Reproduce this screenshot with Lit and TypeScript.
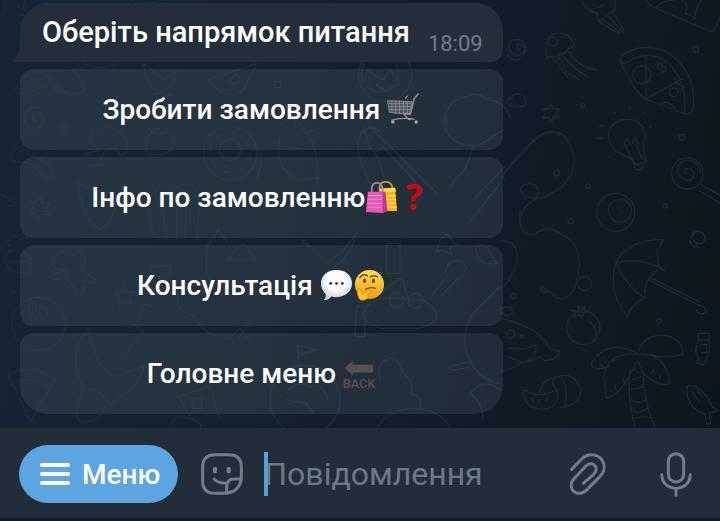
import { LitElement, html, css, svg } from "lit";
import { customElement, property } from "lit/decorators.js";

const cart = svg`
  <g fill="none" stroke="#8d8f98" stroke-linecap="round" stroke-linejoin="round">
    <path d="M1 8 L26 9 L23 22 L3 20 Z" fill="#4b535e" stroke-width="1"/>
    <path d="M1 11H25 M2 14H25 M2 17H24 M5 8V20 M9 8V21 M13 8V21 M17 8.500V21.500 M21 9V22" stroke-width=".8"/>
    <path d="M32 1 L28 6 L24 22 Q19 20 18 22 Q20 26 23 27" stroke-width="1.600"/>
    <path d="M5 28 Q14 25 28 27" stroke-width="1.400"/>
    <path d="M19 6 L21 3" stroke-width="1"/>
  </g>
  <g fill="#a9a4a5"><circle cx="6" cy="30" r="1.800"/><circle cx="30" cy="30" r="1.800"/><circle cx="23" cy="27" r="1.200"/></g>`;

const bags = svg`
  <path d="M15 11V6Q16 1 21 1Q27 1 28 6V11" fill="none" stroke="#c99a32" stroke-width="1.800"/>
  <path d="M15 8L31 7L33 31L18 31Z" fill="#f2b71f"/>
  <path d="M15 8L31 7L32 11L17 12Z" fill="#ffd94a"/>
  <path d="M22 15H32M22 19H32M22 23H32M22 27H33" stroke="#ffda5a" stroke-width="1.200"/>
  <path d="M7 12V7Q8 2 12 2Q17 2 18 7V12" fill="none" stroke="#a8879c" stroke-width="1.800"/>
  <path d="M3 11L20 11L23 31L18 33L1 32Z" fill="#e358b9"/>
  <path d="M18 11L21 11L23 31L18 33Z" fill="#b93b93"/>
  <path d="M3 15H18M3 19H18M2 23H18M2 27H18" stroke="#f27dce" stroke-width="1.200"/>`;

const question = svg`<text x="16.500" y="30" text-anchor="middle" class="mark">?</text>`;

const speech = svg`
  <defs><radialGradient id="s" cx=".5" cy=".35" r=".65">
    <stop offset=".5" stop-color="#fbfbfc"/><stop offset="1" stop-color="#c9ccd0"/></radialGradient></defs>
  <path d="M17 1C27 1 33 7 33 15C33 23 26 29 17 29C15 29 13 29 12 28C10 31 7 32 4 32C6 30 6 28 6 26C3 23 1 20 1 15C1 7 7 1 17 1Z" fill="url(#s)"/>
  <g fill="#3d4248"><circle cx="11" cy="15" r="1.500"/><circle cx="17" cy="15" r="1.500"/><circle cx="23" cy="15" r="1.500"/></g>`;

const thinking = svg`
  <defs><linearGradient id="f" x2="0" y2="1">
    <stop stop-color="#ffe04c"/><stop offset="1" stop-color="#f39a16"/></linearGradient></defs>
  <circle cx="17" cy="16" r="15" fill="url(#f)"/>
  <ellipse cx="12" cy="12" rx="1.600" ry="2.300" fill="#67400d"/>
  <ellipse cx="21" cy="12" rx="1.600" ry="2.300" fill="#67400d"/>
  <path d="M7 9Q10 4 15 7M18 8Q22 6 25 8M13 21Q18 18 23 20" fill="none" stroke="#754a10" stroke-width="1.500" stroke-linecap="round"/>
  <path d="M5 21Q7 19 8 22L9 25L18 22Q20 22 19 24L15 26Q17 29 14 31Q8 34 6 30Q4 26 5 21Z" fill="#ffc52d" stroke="#d98109" stroke-width=".8"/>`;

const back = svg`
  <path d="M2 11L10 4V8H31V16H10V19Z" fill="#56504f"/>
  <text x="16.500" y="32" text-anchor="middle" class="back">BACK</text>`;

const pictures = { cart, bags, question, speech, thinking, back };
type Picture = keyof typeof pictures;

/** Emoji sized to sit on a line of button text. */
@customElement("chat-emoji")
export class ChatEmoji extends LitElement {
  static styles = css`
    :host { display: inline-block; width: 33px; height: 33px; vertical-align: -7px; }
    svg { display: block; width: 100%; height: 100%; overflow: visible; }
    .mark { font: 700 36px "Open Sans", sans-serif; fill: #cf0710; }
    .back { font: 500 13px Roboto, sans-serif; fill: #56504f; }
  `;
  @property() name: Picture = "cart";
  render() {
    return html`<svg viewBox="0 0 34 34" aria-hidden="true">${pictures[this.name]}</svg>`;
  }
}

/** Line-art pattern behind the conversation. */
@customElement("chat-wallpaper")
export class ChatWallpaper extends LitElement {
  static styles = css`
    :host { position: absolute; inset: 0; overflow: hidden; }
    svg { display: block; width: 100%; height: 100%; }
    .lines { fill: none; stroke: #1c2932; stroke-width: 4; stroke-linecap: round; stroke-linejoin: round; }
    .left { stroke: #1b2c39; }
    .coin { font: 30px Roboto, sans-serif; fill: #1c2932; stroke: none; }
  `;
  render() {
    return html`<svg viewBox="0 0 2160 1284" preserveAspectRatio="xMinYMin slice" aria-hidden="true">
      <g class="lines" transform="translate(1500 0)">
        <path d="M245 0Q255 28 290 40L297 65L345 28L345 0M275 12l20 10 20-10M297 65l60 37M310 60l50 38M325 48l45 50M338 35l34 55"/>
        <path d="M440 0Q450 22 470 25L625 92Q645 98 650 78L660 50M468 25Q480 0 525 0M545 0Q570 15 555 42Q575 42 583 58Q588 20 605 0"/>
        <path d="M140 175Q130 115 165 100Q210 95 222 136L215 143Q200 145 198 158Q178 160 172 170Q155 165 140 175ZM155 170Q172 190 205 235M170 170Q190 185 200 215L235 238M185 165Q220 205 262 230M207 155Q230 200 290 210"/>
        <circle cx="158" cy="125" r="14"/>
        <path d="M58 150c-15-4-8-22 7-16c20 12 0 38-20 30c-30-15-22-46 7-46c17 0 28 20 23 40q-7 22-27 22q-28-4-27-32"/>
        <path d="M25 315Q12 300 35 293Q40 278 60 282Q85 292 77 316Q50 325 25 315ZM153 314l7 13 17-1-9 14 8 13-15 0-6 12-8-13-18 2 8-15-8-12 16 0z"/>
        <path d="M362 185Q355 178 370 163Q430 125 500 155Q590 215 580 320Q575 345 555 342L435 297Q400 270 362 185L375 190Q440 145 500 185Q560 235 555 340M438 170V297L550 235"/>
        <circle cx="426" cy="225" r="27"/><circle cx="521" cy="277" r="13"/><path d="M480 315q15-20 45 8M525 230q0 25 28 32M472 200c0-12 14-15 15 0c18-8 13 14 0 17z"/>
        <path d="M390 475Q370 462 348 455Q315 415 330 385Q348 355 390 358Q433 365 435 412Q425 442 438 485L410 495ZM398 480l-25-50 10-15 10 20 15-23 8 20-5 10 17 38M400 490q5 25 25 18l14-20M298 378h12M292 415h13M345 341l-3-6M390 326v-6M428 343l6-6M448 381h6M333 467l-6 5"/>
        <path d="M15 540Q0 530 30 500L110 415Q160 380 195 410Q240 470 210 530Q170 590 105 595Q60 590 62 565Q75 545 105 555Q125 575 100 602Q60 625 60 665M10 530Q50 455 125 403Q155 385 180 405"/>
        <circle cx="170" cy="519" r="9"/><circle cx="587" cy="149" r="9"/><circle cx="546" cy="412" r="9"/><circle cx="495" cy="617" r="7"/><circle cx="248" cy="316" r="6"/><circle cx="264" cy="558" r="6"/>
        <circle cx="562" cy="520" r="47"/><path d="M560 523c-15-10 0-23 14-14c20 18-3 42-27 26c-25-20-15-48 10-54c22-4 43 14 43 38M595 570l75 45M602 553l70 40"/>
        <circle cx="347" cy="637" r="57"/><circle cx="360" cy="632" r="34"/><text class="coin" x="352" y="643">S</text>
      </g>
      <g class="lines" transform="translate(1500 630)">
        <path d="M60 0Q52 80 102 74Q145 45 175 68Q240 95 238 170L230 215Q215 275 170 263Q145 235 135 248Q115 240 127 228L145 248"/>
        <circle cx="254" cy="221" r="21"/><circle cx="212" cy="34" r="8"/><circle cx="40" cy="258" r="8"/><circle cx="478" cy="333" r="7"/>
        <path d="M0 92Q55 90 52 150Q45 190 12 230M0 295Q45 285 35 312Q15 325 0 300M0 325Q120 350 152 420L180 422Q175 450 135 452L118 440Q90 460 60 458Q35 480 0 484M28 415Q75 420 108 406Q110 450 70 455Q40 450 25 440"/><circle cx="32" cy="372" r="12"/><circle cx="66" cy="380" r="5"/>
        <path d="M348 158Q380 90 490 88L472 120L475 165L494 182Q430 140 348 158Q320 240 383 322Q385 290 435 264Q380 230 348 158M435 264Q430 205 475 180M450 212L595 285Q620 290 617 305Q600 320 588 300M455 205L600 276"/>
        <path d="M590 102c-25-20-5-45 15-35c20 16 7 40-18 32M570 100q0-35 25-37M600 112q-25 0-30-18"/>
        <circle cx="250" cy="353" r="50"/><path d="M250 308l-40-8 18 10-10 12 22-8 3 10 8-16 16-4-15-5 3-10-12 8-10-10 2 15M267 335q30 20 18 60"/>
        <path d="M415 423Q435 370 500 377Q550 390 548 433Q500 448 447 433M412 430Q330 385 278 452Q265 480 305 475L330 468M420 432Q500 430 508 520Q480 535 430 490L415 455M415 432Q320 425 312 500L320 565Q365 550 400 475L408 455M390 480Q380 560 405 650M430 490Q430 580 465 650M405 480l12 10M398 510l25-10M393 540l36-10M393 570q20 15 45 0M397 600q18 15 45-5M405 625q25-10 50 0M345 525l3 12M370 510l6 12M455 490l6-10M480 505l2-10M300 463l10 6M340 455l5-10"/>
        <path d="M70 540Q80 540 83 545Q120 565 168 540Q182 560 160 590Q115 610 82 580Q68 560 70 540M120 548Q125 505 170 502Q215 480 242 535Q245 590 175 592M170 502Q145 515 172 540M188 505Q205 550 195 590M100 575l-5-10M117 580v-12M137 575l5-10"/>
        <path d="M595 370h32v20h-32zM595 390Q580 430 595 440Q600 455 590 460l20 5 10-22Q635 410 625 390M605 403h15v25h-15M560 540Q555 520 590 530Q630 560 635 590L655 600L628 610L632 640Q615 650 617 612Q565 600 560 540M575 545l25 30M590 535l15 25"/>
      </g>
      <g class="lines left">
        <path d="M0 55Q18 30 15 0M48 0L60 30L55 48L70 45L78 65M75 0L68 25L80 35M390 0L420 12L500 0"/>
        <path d="M45 270Q75 200 140 225Q200 310 255 270Q250 240 215 210M45 270Q55 295 140 255M155 225Q145 255 180 280M250 190Q310 215 350 190M430 190Q440 260 480 275Q530 255 525 215L490 240L430 190M470 275l-15 10 30-5 35 10-25-18M625 240L770 190L730 270Q680 310 625 240M720 235q-15-20-25 0q-15 15 5 15q20 5 20-15"/>
        <path d="M110 365c-30-12-5-40 15-20c20 30-20 55-42 35c-20-25-3-65 35-57M248 465L300 450Q260 425 275 395Q345 360 380 420Q390 460 360 465Q350 440 330 445L310 455L300 495L265 500M442 415Q425 470 475 465Q525 460 520 415Q500 390 475 400Q450 390 442 415M460 400l-15-15 25 15 5-20 8 22 20-12"/>
        <circle cx="192" cy="388" r="10"/><circle cx="690" cy="460" r="80"/><circle cx="690" cy="450" r="32"/><circle cx="690" cy="458" r="60" stroke-dasharray="18 30"/>
        <path d="M65 485Q25 490 30 460Q40 440 60 455Q80 440 85 465Q150 480 160 520L145 535L120 520Q110 490 65 485M0 580L45 610Q45 630 0 605M120 590l8 20 22-2-12 18 10 18-22-2-10 18-8-20-20 2 12-18-12-18 20 2z"/>
        <path d="M235 545Q240 650 300 690Q350 660 345 590Q310 560 290 580M235 545L275 570M450 600Q440 700 480 715M450 600Q480 530 530 560Q580 535 600 590L590 715M485 610L500 715M530 590V715M560 600L555 710"/>
        <circle cx="1155" cy="225" r="80"/><circle cx="1140" cy="220" r="55" stroke-dasharray="55 18"/><path d="M1100 210l50 30 20-30 30 40-40 25-30-20M1090 380L1110 440Q1140 470 1150 530M1090 390Q1050 430 1110 550L1160 570M1110 380L1310 580M1105 440Q1130 465 1150 440L1260 560M1090 400Q1110 370 1140 395"/>
        <path d="M840 415Q820 500 890 540L960 535M840 380Q880 330 910 390Q960 430 950 560M885 380l-8-30M915 400l40-15M870 445h30M1335 385Q1330 300 1400 290Q1430 270 1460 300Q1510 300 1530 350M1335 385Q1360 440 1420 435L1400 500L1350 560M1430 440L1510 390M1420 600L1515 500M1410 665L1500 550"/>
        <path d="M825 245h18v18h-18zM1330 355h10v14h-10zM770 535Q800 460 755 430"/>
        <path d="M20 790Q30 820 90 815M30 740l-15-15 15-5 10-15 20 15 20-10 5 20-20 15Q115 795 85 815Q25 830 15 785Q15 755 40 750M20 780Q50 795 95 775M165 805Q145 780 170 765Q195 740 220 765L250 745L255 790L245 810L290 840L285 850L250 840L250 880L230 880L200 830L160 840L155 825L200 810Z"/>
        <circle cx="115" cy="972" r="80"/><ellipse cx="97" cy="923" rx="12" ry="18"/><ellipse cx="130" cy="938" rx="12" ry="18"/><circle cx="85" cy="965" r="10"/><circle cx="40" cy="877" r="6"/>
        <path d="M370 860l10 18 20-2-12 16 8 20-20-8-18 14 2-22-14-14 20-4zM455 800q-3 35 35 30q30-5 20-35zM620 820V740L655 690L690 740M620 820L645 870M680 780L730 730L770 780ZM535 880Q520 930 580 945Q610 1010 690 1015L720 985L750 1020M715 1015l35-50M410 965l25-55 20 10M385 985q20-20 45 10l-65 80M265 985Q210 1040 235 1130L250 1165L235 1205Q220 1260 245 1265Q300 1270 315 1220M265 985Q285 1110 350 1130L430 1100Q430 1150 330 1210Q300 1170 270 1165"/>
        <path d="M25 1120Q110 1090 165 1140L90 1265L25 1120L30 1155Q100 1120 155 1165M515 1275Q520 1240 570 1255Q610 1270 600 1284M570 1250L535 1190L630 1160L650 1230L665 1255M580 1195h25v30h-25z"/><circle cx="83" cy="1240" r="9"/><circle cx="120" cy="1220" r="12"/>
        <path d="M920 730L980 790L1030 750L1070 700M930 740Q890 720 920 720M985 810q60-30 80-90M1160 730h40v90h-40zM1320 720l20-20 15 20 15 15-20 10 5 20-25-15-20 5z"/>
        <path d="M1085 945Q1110 890 1180 895L1270 900Q1360 960 1250 985H1140Q1100 970 1085 945M1070 920h25v90h-30zM1130 890L1190 840Q1210 820 1215 870L1230 905M1300 880L1340 830Q1330 790 1370 780Q1420 800 1380 830L1320 890"/><circle cx="1190" cy="900" r="22"/><circle cx="1247" cy="902" r="22"/>
        <circle cx="915" cy="1200" r="105"/><path d="M860 1180Q880 1140 930 1160Q970 1150 985 1200M860 1200L920 1210L940 1240M895 1120V1035L950 1050L900 1065M1140 1140Q1130 1080 1160 1080Q1190 1060 1210 1120Q1250 1150 1230 1180Q1270 1190 1260 1220M1130 1284Q1180 1210 1280 1230Q1340 1250 1350 1284M1440 920Q1380 970 1400 1060Q1430 1140 1500 1150M1410 1100Q1340 1120 1350 1100L1410 1085M1430 760Q1420 730 1460 740L1490 790Q1440 800 1430 760M1440 920L1500 860M1410 1180Q1450 1130 1500 1170M1410 1180Q1450 1210 1450 1260"/>
      </g>
    </svg>`;
  }
}

interface Choice { label: string; emoji: Picture[]; }

@customElement("app-root")
export class AppRoot extends LitElement {
  static styles = css`
    * { box-sizing: border-box; }
    :host {
      display: flex; flex-direction: column; min-height: 100vh;
      font-family: Roboto, "Noto Sans", sans-serif; color: #fff; background: #131d27;
    }
    .chat {
      position: relative; flex: 1; padding: 3px 20px 14px;
      background: linear-gradient(100deg, #162534 0%, #14222e 40%, #111c28 68%, #0e1920 88%, #0c151b 100%);
    }
    .thread { position: relative; display: grid; gap: 7px; width: fit-content; max-width: 100%; }
    .message {
      position: relative; display: flex; align-items: flex-end; gap: 18px;
      min-height: 59px; padding: 0 20px 0 22px;
      border-radius: 28px 28px 12px 0; background: #232e3a;
    }
    .tail { position: absolute; left: -8px; bottom: 0; width: 10px; height: 22px; fill: #232e3a; }
    .question { margin: 0; padding: 13px 0; font-size: 29px; line-height: 33px; font-weight: 500; }
    .time { padding-bottom: 5px; font-size: 22px; line-height: 26px; color: #717b87; }
    .choice {
      height: 81px; padding: 0 16px; border: 0; border-radius: 14px;
      background: rgba(102, 120, 130, 0.2); color: inherit;
      font: 500 28px/33px Roboto, "Noto Sans", sans-serif;
    }
    .choice:last-child { border-radius: 14px 14px 28px 28px; }
    .composer {
      display: flex; align-items: center; padding: 17px 28px 15px 19px; margin-bottom: 3px;
      background: #222d3a;
    }
    .menu {
      display: flex; align-items: center; gap: 12px; height: 58px; padding: 0 18px 0 21px;
      border: 0; border-radius: 29px; background: #5ca5e0; color: #fff;
      font: 500 28px/33px Roboto, "Noto Sans", sans-serif;
    }
    .icon { flex: none; padding: 0; border: 0; background: none; color: #727d8a; }
    .icon svg, .menu svg { display: block; fill: none; stroke: currentColor; stroke-linecap: round; stroke-linejoin: round; }
    .sticker { margin-left: 23px; }
    .mic { margin-left: 54px; }
    .field { position: relative; flex: 1; min-width: 0; margin: 0 20px 0 21px; }
    .field::before { content: ""; position: absolute; left: 0; top: 0; width: 4px; height: 44px; background: #559fda; }
    .entry {
      display: block; width: 100%; height: 44px; padding: 0; border: 0; outline: 0; background: none;
      color: #fff; font: 400 32px/44px Roboto, "Noto Sans", sans-serif;
    }
    .entry::placeholder { color: #6d7986; opacity: 1; }
  `;

  private choices: Choice[] = [
    { label: "Зробити замовлення ", emoji: ["cart"] },
    { label: "Інфо по замовленню", emoji: ["bags", "question"] },
    { label: "Консультація ", emoji: ["speech", "thinking"] },
    { label: "Головне меню ", emoji: ["back"] },
  ];

  render() {
    return html`
      <main class="chat">
        <chat-wallpaper></chat-wallpaper>
        <div class="thread">
          <div class="message">
            <svg class="tail" viewBox="0 0 10 22" aria-hidden="true"><path d="M8 0Q8 16 0 21V22H10V0Z"/></svg>
            <p class="question">Оберіть напрямок питання</p>
            <time class="time">18:09</time>
          </div>
          ${this.choices.map((c) => html`<button class="choice">${c.label}${c.emoji.map((e) => html`<chat-emoji name=${e}></chat-emoji>`)}</button>`)}
        </div>
      </main>
      <footer class="composer">
        <button class="menu">
          <svg width="30" height="24" viewBox="0 0 30 24" stroke-width="4" aria-hidden="true"><path d="M2 3H28M2 12H28M2 21H28"/></svg>
          Меню
        </button>
        <button class="icon sticker" aria-label="Наліпки">
          <svg width="42" height="42" viewBox="603 100 126 126" stroke-width="9" aria-hidden="true">
            <path d="M677 221H645Q608 221 608 184V142Q608 105 645 105H687Q724 105 724 142V177Q719 215 680 221V200Q681 178 702 178H723"/>
            <path d="M642 178Q655 191 674 190"/>
            <path d="M645 148v7M686 148v7" stroke-width="13"/>
          </svg>
        </button>
        <div class="field"><input class="entry" type="text" placeholder="Повідомлення" aria-label="Повідомлення" /></div>
        <button class="icon" aria-label="Прикріпити файл">
          <svg width="36" height="42" viewBox="92 99 108 126" stroke-width="9" aria-hidden="true">
            <path d="M97 148L127 117C146 99 172 102 186 117C199 134 197 154 182 169L143 209C129 223 111 223 101 212C93 201 94 187 104 176L139 139C148 129 160 129 167 137C173 146 171 155 163 163L132 190"/>
          </svg>
        </button>
        <button class="icon mic" aria-label="Записати голосове">
          <svg width="32" height="45" viewBox="360 96 96 135" stroke-width="9" aria-hidden="true">
            <rect x="385" y="101" width="46" height="85" rx="23"/>
            <path d="M365 164C367 219 449 219 451 164M408 206V226"/>
          </svg>
        </button>
      </footer>
    `;
  }
}
